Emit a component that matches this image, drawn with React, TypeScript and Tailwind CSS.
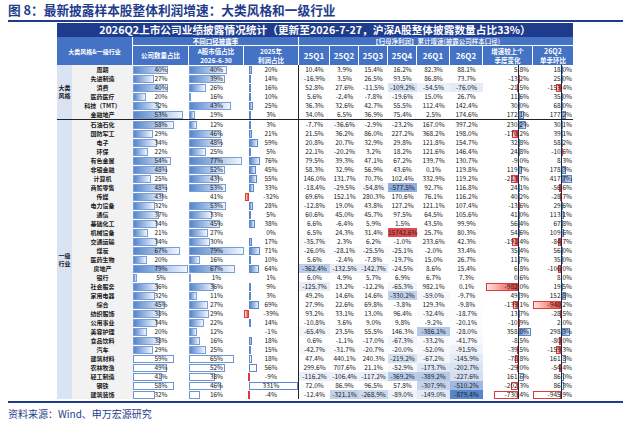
import React from "react";

type Row = [string, number, number, number, number[], number, number];

const styleRows: Row[] = [
  ["周期", 40, 40, 20, [10.4, 3.9, 15.4, 16.2, 82.3, 88.1], 5.8, 18.0],
  ["先进制造", 27, 39, 14, [-16.9, 3.5, 26.5, 93.5, 86.8, 73.7], -13.2, 25.0],
  ["消费", 40, 26, 16, [52.8, 27.6, -11.5, -109.2, -54.5, -76.0], -21.5, -153.4],
  ["医药医疗", 20, 16, 10, [5.6, -2.4, -7.8, -19.6, 15.0, 26.7], 11.6, 35.0],
  ["科技（TMT）", 32, 43, 25, [36.3, 32.6, 42.7, 55.5, 112.4, 142.4], 30.0, 68.0],
  ["金融地产", 53, 19, 3, [34.0, 6.5, 36.9, 75.4, 2.5, 174.6], 172.1, 177.2],
];

const indRows: Row[] = [
  ["石油石化", 58, 12, 3, [-7.7, -36.6, -2.9, -23.2, 167.0, 397.2], 230.2, 30.1],
  ["国防军工", 29, 46, 21, [21.5, 36.2, 86.0, 227.2, 368.2, 198.0], -170.2, 39.1],
  ["电子", 34, 48, 59, [20.8, 20.7, 32.9, 29.8, 121.8, 154.7], 32.8, 58.2],
  ["环保", 22, 25, 5, [22.1, -20.2, 3.2, 18.2, 121.6, 146.4], 24.8, -10.6],
  ["有色金属", 54, 77, 76, [79.5, 39.3, 47.1, 67.2, 139.7, 130.7], -9.0, 8.3],
  ["非银金融", 48, 52, 45, [58.3, 32.9, 56.9, 43.6, 0.1, 119.8], 119.7, 178.3],
  ["计算机", 25, 43, 55, [146.0, 131.7, 70.7, 102.4, 332.9, 119.2], -213.7, 417.7],
  ["商贸零售", 48, 53, 33, [-18.4, -29.5, -54.8, -577.5, 92.7, 116.8], 24.1, -56.6],
  ["传媒", 43, 41, -32, [69.6, 152.1, 280.3, 170.6, 76.1, 116.2], 40.2, -28.7],
  ["电力设备", 32, 53, 28, [-12.8, 19.0, 43.8, 127.2, 121.1, 107.4], -13.6, 29.6],
  ["通信", 37, 33, 5, [60.6, 45.0, 45.7, 97.5, 64.5, 105.6], 41.0, 113.1],
  ["基础化工", 34, 45, 38, [6.6, -6.4, 5.9, 1.5, 43.5, 99.9], 56.4, 67.8],
  ["机械设备", 21, 27, 0, [6.5, 24.3, 31.4, 15742.6, 25.7, 80.3], 54.6, 109.6],
  ["交通运输", 34, 30, 17, [-35.7, 2.3, 6.2, -1.0, 233.6, 42.3], -191.4, -84.7],
  ["煤炭", 67, 79, 71, [-26.0, -28.1, -25.5, -25.1, -2.0, 33.4], 35.4, 56.0],
  ["医药生物", 20, 16, 10, [5.6, -2.4, -7.8, -19.7, 15.0, 26.7], 11.7, 35.0],
  ["房地产", 79, 67, 64, [-362.4, -132.5, -142.7, -24.5, 8.6, 15.4], 6.8, -106.0],
  ["银行", 5, 1, 1, [6.0, 4.9, 5.7, 6.9, 6.7, 7.3], 0.6, 8.0],
  ["社会服务", 36, 36, 9, [-125.7, 13.2, -12.2, -65.3, 982.1, 0.1], -982.0, 19.5],
  ["家用电器", 32, 11, 3, [49.2, 14.6, 14.6, -330.2, -59.0, -9.7], 49.3, 152.8],
  ["综合", 45, 27, 69, [27.9, 22.6, 69.8, -3.8, 129.3, -9.8], -139.1, -940.2],
  ["纺织服饰", 38, 29, -39, [93.2, 33.1, 13.0, 96.4, -32.4, -18.7], 13.7, -28.5],
  ["公用事业", 34, 22, 14, [-10.8, 3.6, 9.0, 9.8, -9.2, -20.1], -10.9, 2.0],
  ["美容护理", 20, 12, -1, [-65.4, 23.5, 55.5, 146.3, -386.1, -28.0], 358.0, 298.3],
  ["食品饮料", 38, 16, 18, [0.6, -1.1, -17.0, -67.3, -33.2, -41.7], -8.5, -80.0],
  ["汽车", 29, 25, 15, [-42.7, -31.7, -20.7, -20.0, -52.0, -91.5], -39.5, -159.3],
  ["建筑材料", 59, 65, 18, [47.4, 440.1, 240.3, -219.2, -67.2, -145.9], -78.8, 161.8],
  ["农林牧渔", 49, 52, 56, [299.6, 707.6, 21.1, -52.9, -173.7, -202.7], -29.0, -54.4],
  ["轻工制造", 41, 38, -9, [-116.2, -106.4, -117.2, -369.2, -389.2, -227.6], 161.6, 86.0],
  ["钢铁", 58, 46, 331, [72.0, 86.9, 96.5, 57.8, -307.9, -510.2], -202.3, 86.3],
  ["建筑装饰", 32, 16, -4, [-12.4, -321.1, -268.9, -89.0, -149.0, -879.4], -730.4, -945.9],
];

const OUTLINE = new Set(["建筑材料", "农林牧渔", "轻工制造", "钢铁", "建筑装饰"]);
const Q_W = ["w-[31px]", "w-[29px]", "w-[29px]", "w-[29px]", "w-[33px]", "w-[33px]"];

function mix(c: number[], t: number) {
  return `rgb(${c.map((x) => Math.round(255 + (x - 255) * t)).join(",")})`;
}

function heat(v: number, scale: number) {
  if (v < 0) return mix([74, 123, 200], Math.min(0.92, -v / scale));
  if (v > 5000) return mix([226, 72, 74], Math.min(1, v / 16000));
  return undefined;
}

function ShareCell({ v, len, outline, cls }: { v: number; len: number; outline: boolean; cls: string }) {
  return (
    <div className={`relative h-full text-center ${cls}`}>
      {len > 0 && (
        <div
          className={`absolute left-0 top-[0.5px] h-[8px] border ${
            outline ? "border-[#6f96d4] bg-white" : "border-[#7a9fd8] bg-linear-to-r from-[#5585cc] to-[#f2f6fc]"
          }`}
          style={{ width: len }}
        />
      )}
      <span className="relative">{v}%</span>
    </div>
  );
}

function AxisCell({
  v,
  text,
  axis,
  kPos,
  kNeg,
  maxPos,
  maxNeg,
  outline,
  cls,
  line,
}: {
  v: number;
  text: string;
  axis: number;
  kPos: number;
  kNeg: number;
  maxPos: number;
  maxNeg: number;
  outline: boolean;
  cls: string;
  line?: string;
}) {
  const len = v >= 0 ? Math.min(maxPos, v * kPos) : Math.min(maxNeg, -v * kNeg);
  const left = v >= 0 ? axis : axis - len;
  const bar =
    v >= 0
      ? outline
        ? "border-[#5b87cc] bg-white"
        : "border-[#5b87cc] bg-linear-to-r from-[#5b87cc] to-[#e8eff9]"
      : outline
        ? "border-[#e0393b] bg-white"
        : "border-[#e0393b] bg-linear-to-r from-[#fde3e3] to-[#e0393b]";
  return (
    <div className={`relative h-full ${cls}`}>
      {len > 0.3 && (
        <div className={`absolute top-[0.5px] h-[8px] border ${bar}`} style={{ left, width: len }} />
      )}
      {line && <div className={`absolute top-0 bottom-0 w-[1.5px] bg-[#1a2540] ${line}`} />}
      <span className="relative">{text}</span>
    </div>
  );
}

function DataRow({ r, sec }: { r: Row; sec: "style" | "ind" }) {
  const [name, a, b, c, q, chg, qoq] = r;
  const outline = OUTLINE.has(name);
  const lenA = sec === "style" ? (a - 8) * 1.1 : a * 0.7;
  const lenB = name === "传媒" ? 0 : sec === "style" ? (b - 15) * 1.5 : b * 0.69;
  const scale = sec === "style" ? 500 : 950;
  return (
    <div className="flex h-[9px] text-[6.5px] leading-[9px] text-[#222]">
      <div className="w-[61px] bg-[#f2f2f2] text-center text-[6px] font-bold text-[#1a1a1a]">{name}</div>
      <ShareCell v={a} len={lenA} outline={outline} cls="w-[56px]" />
      <ShareCell v={b} len={lenB} outline={outline} cls="w-[55px]" />
      <AxisCell
        v={c}
        text={`${c}%`}
        axis={5}
        kPos={0.15}
        kNeg={0.13}
        maxPos={49}
        maxNeg={5}
        outline={outline}
        cls="w-[55px] text-center border-r border-[#222]"
      />
      {q.map((v, i) => (
        <div key={i} className={`h-full text-center ${Q_W[i]}`} style={{ background: heat(v, scale) }}>
          {v.toFixed(1)}%
        </div>
      ))}
      <AxisCell
        v={chg}
        text={`${chg.toFixed(1)}%`}
        axis={35}
        kPos={0.035}
        kNeg={0.033}
        maxPos={14}
        maxNeg={34}
        outline={outline}
        cls="w-[50px] text-right pr-[4px]"
        line="left-[34.5px]"
      />
      <AxisCell
        v={qoq}
        text={`${qoq.toFixed(1)}%`}
        axis={28}
        kPos={0.03}
        kNeg={0.0296}
        maxPos={11}
        maxNeg={28}
        outline={outline}
        cls="w-[40px] text-right pr-[1px]"
        line="left-[27.5px]"
      />
    </div>
  );
}

function Section({ label, rows, sec }: { label: string[]; rows: Row[]; sec: "style" | "ind" }) {
  return (
    <div className="flex">
      <div className="w-[15px] bg-[#dae3f3] flex flex-col items-center justify-center text-[6px] leading-[8px] font-bold text-[#1a1a1a]">
        <span>{label[0]}</span>
        <span>{label[1]}</span>
      </div>
      <div className="flex flex-col">
        {rows.map((r) => (
          <DataRow key={r[0]} r={r} sec={sec} />
        ))}
      </div>
    </div>
  );
}

export default function App() {
  const hd = "flex flex-col items-center justify-center border-r border-white leading-[9px]";
  return (
    <div className="w-[640px] h-[425px] bg-white overflow-hidden font-['Noto_Sans_CJK_SC','Noto_Sans',sans-serif]">
      {/* Figure title */}
      <div className="h-[20px] pl-[8px] flex items-center text-[12.7px] leading-[14px] font-bold text-[#1f3c8c]">
        图 8：最新披露样本股整体利润增速：大类风格和一级行业
      </div>
      <div className="ml-[8px] w-[615px] h-[2px] bg-[#1f3c8c]" />

      {/* Table */}
      <div className="ml-[57px] mt-[1px] w-[516px]">
        <div className="h-[14px] bg-[#1f3c8c] flex items-center justify-center text-white font-bold text-[10.7px] leading-[14px]">
          2026Q2上市公司业绩披露情况统计（更新至2026-7-27，沪深A股整体披露数量占比33%）
        </div>
        <div className="grid grid-cols-[76px_56px_55px_55px_31px_29px_29px_29px_33px_33px_50px_40px] grid-rows-[9px_19px] bg-[#4472c4] text-white font-bold text-[6.5px] leading-[9px]">
          <div className="row-span-2 flex items-center justify-center border-r border-white text-[6px]">
            大类风格&一级行业
          </div>
          <div className="col-span-3 flex items-center justify-center border-r border-b border-white leading-[8px]">
            不同口径披露率
          </div>
          <div className="col-span-8 flex items-center justify-center border-b border-white font-medium leading-[8px]">
            【归母净利润】累计增速(披露公司样本口径)
          </div>
          <div className={hd}>公司数量占比</div>
          <div className={hd}>
            <span>A股市值占比</span>
            <span>2026-6-30</span>
          </div>
          <div className={hd}>
            <span>2025年</span>
            <span>利润占比</span>
          </div>
          <div className={`${hd} text-[8px]`}>25Q1</div>
          <div className={`${hd} text-[8px]`}>25Q2</div>
          <div className={`${hd} text-[8px]`}>25Q3</div>
          <div className={`${hd} text-[8px]`}>25Q4</div>
          <div className={`${hd} text-[8px]`}>26Q1</div>
          <div className={`${hd} text-[8px]`}>26Q2</div>
          <div className={hd}>
            <span>增速较上个</span>
            <span>季度变化</span>
          </div>
          <div className="flex flex-col items-center justify-center leading-[9px]">
            <span className="text-[7px]">26Q2</span>
            <span>单季环比</span>
          </div>
        </div>
        <Section label={["大类", "风格"]} rows={styleRows} sec="style" />
        <div className="h-px bg-[#222]" />
        <Section label={["一级", "行业"]} rows={indRows} sec="ind" />
      </div>

      <div className="ml-[8px] mt-[2px] w-[615px] h-[2px] bg-[#1f3c8c]" />
      <div className="pl-[8px] pt-[5px] text-[10px] leading-[12px] text-[#1f3c8c]">资料来源：Wind、申万宏源研究</div>
    </div>
  );
}
